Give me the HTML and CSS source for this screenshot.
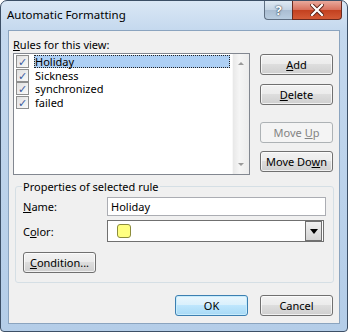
FILE: index.html
```html
<!DOCTYPE html>
<html lang="en">
<head>
    <meta charset="UTF-8">
    <title>Automatic Formatting</title>
    <link rel="stylesheet" href="styles.css">
</head>
<body>
    <div class="window">
        <div class="titlebar">
            <span class="title">Automatic Formatting</span>
            <div class="caption-buttons">
                <div class="cap-btn help">?</div>
                <div class="cap-btn close">
                    <svg width="14" height="12" viewBox="0 0 14 12">
                        <path d="M2 1 L12 11 M12 1 L2 11" stroke="#5a2015" stroke-width="4" stroke-linecap="square"/>
                        <path d="M2 1 L12 11 M12 1 L2 11" stroke="#ffffff" stroke-width="2.2" stroke-linecap="square"/>
                    </svg>
                </div>
            </div>
        </div>

        <div class="client">
            <div class="label rules-label"><u>R</u>ules for this view:</div>

            <div class="rules-row">
                <div class="listbox">
                    <div class="items">
                        <div class="item selected"><span class="check">&#10003;</span><span class="text">Holiday</span></div>
                        <div class="item"><span class="check">&#10003;</span><span class="text">Sickness</span></div>
                        <div class="item"><span class="check">&#10003;</span><span class="text">synchronized</span></div>
                        <div class="item"><span class="check">&#10003;</span><span class="text">failed</span></div>
                    </div>
                    <div class="scrollbar">
                        <span class="arrow up"></span>
                        <span class="arrow down"></span>
                    </div>
                </div>
                <div class="side-buttons">
                    <button class="btn"><u>A</u>dd</button>
                    <button class="btn"><u>D</u>elete</button>
                    <button class="btn disabled">Move <u>U</u>p</button>
                    <button class="btn">Move Do<u>w</u>n</button>
                </div>
            </div>

            <fieldset class="group">
                <legend>Properties of selected rule</legend>
                <div class="field">
                    <span class="label"><u>N</u>ame:</span>
                    <div class="textbox">Holiday</div>
                </div>
                <div class="field">
                    <span class="label">C<u>o</u>lor:</span>
                    <div class="combo">
                        <span class="swatch"></span>
                        <span class="drop">
                            <svg width="8" height="5" viewBox="0 0 8 5"><path d="M0 0 H8 L4 5 Z" fill="#000"/></svg>
                        </span>
                    </div>
                </div>
                <button class="btn condition"><u>C</u>ondition...</button>
            </fieldset>

            <div class="footer">
                <button class="btn default">OK</button>
                <button class="btn">Cancel</button>
            </div>
        </div>
    </div>
</body>
</html>
```

FILE: styles.css
```css
body {
    margin: 0;
    font-family: "Noto Sans", "DejaVu Sans", sans-serif;
    font-size: 11px;
    background: #ffffff;
}

.window {
    width: 346px;
    height: 330px;
    border: 1px solid #3c4f66;
    border-radius: 7px 7px 4px 4px;
    background: linear-gradient(180deg, #dae7f5 0px, #c4d8ee 30px, #b4cde8 100%);
    display: flex;
    flex-direction: column;
    overflow: hidden;
}

.titlebar {
    height: 29px;
    display: flex;
    justify-content: space-between;
    align-items: flex-start;
}

.title {
    margin: 6px 0 0 6px;
    font-size: 11.5px;
    color: #000;
}

.caption-buttons {
    display: flex;
    margin-right: 5px;
}

.cap-btn {
    height: 18px;
    border: 1px solid #5f6f82;
    border-top: none;
    display: flex;
    align-items: center;
    justify-content: center;
}

.help {
    width: 27px;
    border-radius: 0 0 0 4px;
    border-right: none;
    background: linear-gradient(180deg, #dfe9f3 0%, #c3d3e3 50%, #aabdd2 51%, #b9cde0 100%);
    color: #fff;
    font-weight: bold;
    font-size: 13px;
    text-shadow: 0 0 2px #2a3a4c, 0 0 1px #2a3a4c;
}

.close {
    width: 48px;
    border-radius: 0 0 4px 0;
    border-color: #6a2a1f;
    background: linear-gradient(180deg, #e9a99c 0%, #d8705c 50%, #c3401f 51%, #d45a36 100%);
}

.client {
    margin: 0 7px 7px 7px;
    flex: 1;
    background: #f0f0f0;
    border: 1px solid #8ba4bf;
    padding: 6px 6px 0 4px;
    display: flex;
    flex-direction: column;
}

.label {
    color: #000;
}

.rules-label {
    height: 16px;
}

.rules-row {
    display: flex;
    gap: 10px;
}

.listbox {
    width: 235px;
    height: 120px;
    border: 1px solid #828790;
    background: #fff;
    display: flex;
}

.items {
    flex: 1;
    padding: 1px 0 0 2px;
}

.item {
    height: 13.5px;
    display: flex;
    align-items: center;
}

.check {
    width: 11px;
    height: 11px;
    border: 1px solid #8e8f8f;
    background: linear-gradient(135deg, #e0e0e0, #fafafa);
    color: #3b5a9e;
    font-size: 11px;
    line-height: 11px;
    font-weight: bold;
    text-align: center;
    margin-right: 5px;
    flex-shrink: 0;
}

.item .text {
    padding: 0 1px;
    line-height: 13px;
}

.item.selected .text {
    flex: 1;
    background: #aed0f5;
    outline: 1px dotted #222;
    outline-offset: -1px;
    margin-right: 2px;
}

.scrollbar {
    width: 16px;
    background: linear-gradient(90deg, #e8e8e8, #f5f5f5 40%, #ececec);
    border-left: 1px solid #f8f8f8;
    position: relative;
}

.arrow {
    position: absolute;
    left: 5px;
    width: 0;
    height: 0;
    border-left: 3px solid transparent;
    border-right: 3px solid transparent;
}

.arrow.up {
    top: 8px;
    border-bottom: 3px solid #9a9a9a;
}

.arrow.down {
    bottom: 8px;
    border-top: 3px solid #9a9a9a;
}

.side-buttons {
    display: flex;
    flex-direction: column;
    padding-top: 1px;
}

.btn {
    width: 73px;
    height: 21px;
    padding: 0;
    font-family: inherit;
    font-size: 11px;
    color: #000;
    border: 1px solid #707070;
    border-radius: 3px;
    background: linear-gradient(180deg, #f2f2f2 0%, #ebebeb 48%, #dddddd 50%, #cfcfcf 100%);
    box-shadow: inset 0 0 0 1px rgba(255, 255, 255, 0.7);
}

.side-buttons .btn:nth-child(2) {
    margin-top: 9px;
}

.side-buttons .btn:nth-child(3) {
    margin-top: 17px;
}

.side-buttons .btn:nth-child(4) {
    margin-top: 8px;
}

.btn.disabled {
    border-color: #adb2b5;
    background: #f4f4f4;
    color: #838383;
    box-shadow: none;
}

.btn.default {
    border-color: #3c7fb1;
    background: linear-gradient(180deg, #eaf6fd 0%, #d9f0fc 48%, #bee6fd 50%, #a7d9f5 100%);
    box-shadow: inset 0 0 0 1px #c7ecfc;
}

.group {
    margin: 4px 0 0 2px;
    width: 300px;
    height: 99px;
    border: 1px solid #d5dfe5;
    border-radius: 3px;
    padding: 3px 7px 0 7px;
}

.group legend {
    padding: 0 1px;
    margin-left: -1px;
}

.field {
    display: flex;
    align-items: center;
    margin-bottom: 4px;
}

.field .label {
    width: 84px;
}

.textbox {
    width: 214px;
    height: 17px;
    border: 1px solid #abadb3;
    background: #fff;
    padding-left: 3px;
    line-height: 17px;
}

.combo {
    width: 215px;
    height: 20px;
    border: 1px solid #707070;
    background: #fff;
    display: flex;
    align-items: center;
    justify-content: space-between;
}

.swatch {
    width: 12px;
    height: 12px;
    margin-left: 9px;
    border: 1px solid #8c8c3c;
    border-radius: 3px;
    background: #ffff80;
}

.drop {
    width: 15px;
    height: 18px;
    margin-right: 1px;
    border: 1px solid #707070;
    background: linear-gradient(180deg, #f0f0f0, #d4d4d4);
    display: flex;
    align-items: center;
    justify-content: center;
}

.condition {
    margin-top: 6px;
}

.footer {
    display: flex;
    justify-content: flex-end;
    gap: 12px;
    margin-top: 12px;
}
```
